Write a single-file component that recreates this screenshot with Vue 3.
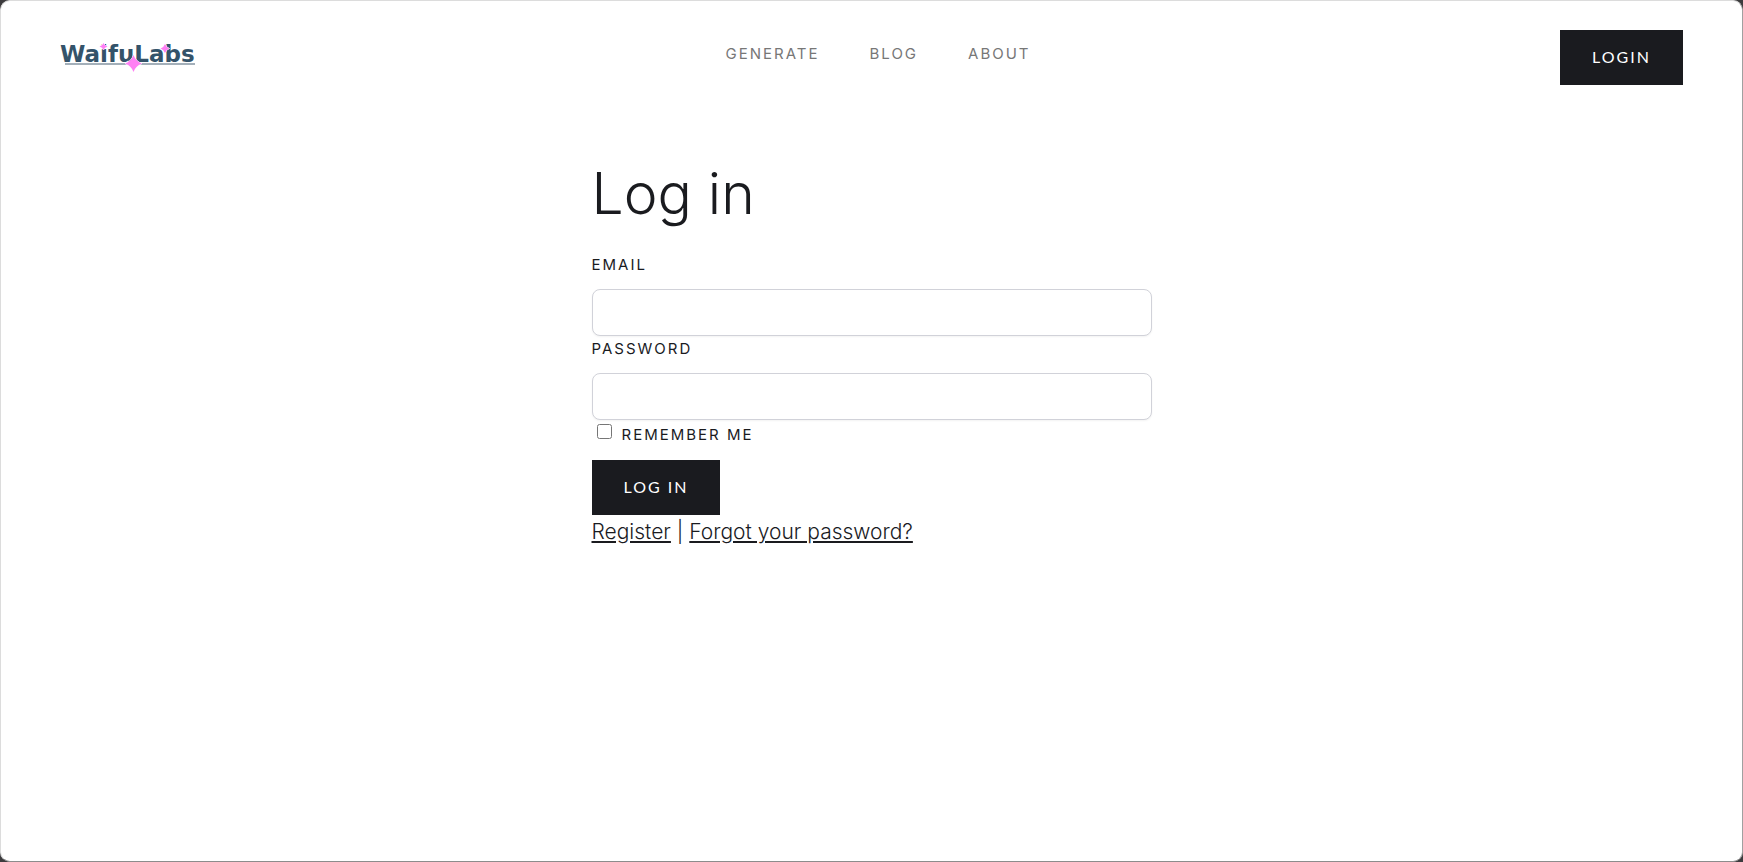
<script setup>
import { ref } from 'vue'

const email = ref('')
const password = ref('')
const remember = ref(false)
const links = ['Generate', 'Blog', 'About']
</script>

<template>
  <div class="page">
    <header class="bar">
      <a class="brand" href="#" aria-label="WaifuLabs">
        <svg width="136" height="32" viewBox="0 0 136 32">
          <path d="M5 22H135" stroke="#a3afb9" stroke-width="2" />
          <text x="0" y="20" class="word">WaifuLabs</text>
          <path class="spark edge" d="M43.500 1Q44.500 4 47.500 4.500Q44.500 5.200 43.500 8Q42.500 5.200 39.500 4.500Q42.500 4 43.500 1Z" />
          <path class="spark edge" d="M105 2Q106.200 5.500 109.500 6.500Q106.200 7.500 105 11Q103.800 7.500 100.500 6.500Q103.800 5.500 105 2Z" />
          <path class="spark edge" d="M73.500 13Q75.800 19.500 82 21.500Q75.800 23.500 73.500 30Q71.200 23.500 65 21.500Q71.200 19.500 73.500 13Z" />
        </svg>
      </a>
      <nav class="nav">
        <a v-for="link in links" :key="link" href="#">{{ link }}</a>
      </nav>
      <button type="button" class="button">Login</button>
    </header>

    <main class="content">
      <h1>Log in</h1>
      <form @submit.prevent>
        <label class="label" for="email">Email</label>
        <input id="email" v-model="email" class="field" type="email" />
        <label class="label" for="password">Password</label>
        <input id="password" v-model="password" class="field" type="password" />
        <div class="remember">
          <input id="remember" v-model="remember" type="checkbox" />
          <label for="remember">Remember me</label>
        </div>
        <button type="submit" class="button">Log in</button>
      </form>
      <p class="more"><a href="#">Register</a> | <a href="#">Forgot your password?</a></p>
    </main>
  </div>
</template>

<style>
body {
  margin: 0;
  background: #3c3b3d;
}
</style>

<style scoped>
.page {
  box-sizing: border-box;
  min-height: 100vh;
  border: 1px solid;
  border-color: #dcdcdc #a0a0a0 #8c8c8c #dcdcdc;
  border-radius: 10px;
  background: #fff;
  color: #1a1b1f;
  font-family: Inter, "Open Sans", sans-serif;
  font-weight: 300;
}

.bar {
  display: flex;
  justify-content: space-between;
  align-items: flex-start;
  padding: 29px 59px 0;
}

.brand {
  margin-top: 12px;
}

.brand svg {
  display: block;
}

.word {
  fill: #34536a;
  font: bold 23px "DejaVu Sans", sans-serif;
}

.spark {
  fill: #ff80f4;
}

.edge {
  stroke: #fff;
  stroke-width: 1px;
  paint-order: stroke;
}

.nav {
  display: flex;
  gap: 50px;
  padding-top: 14px;
}

.nav a {
  color: #777;
  font-size: 15px;
  font-weight: 400;
  line-height: 20px;
  letter-spacing: 2px;
  text-decoration: none;
  text-transform: uppercase;
}

.button {
  height: 55px;
  padding: 0 32px 2px;
  border: 0;
  background: #1a1b1f;
  color: #fff;
  font: 400 16px/24px Lato, sans-serif;
  letter-spacing: 2px;
  text-transform: uppercase;
}

.content {
  box-sizing: border-box;
  width: 100%;
  max-width: 560px;
  margin: 0 auto;
  padding-top: 74px;
}

h1 {
  margin: 0 0 23px;
  font-size: 57px;
  font-weight: 300;
  line-height: 70px;
}

form {
  display: flex;
  flex-direction: column;
  align-items: flex-start;
}

.label,
.remember {
  font-size: 15px;
  font-weight: 400;
  letter-spacing: 2px;
  text-transform: uppercase;
}

.label {
  line-height: 25px;
  margin-bottom: 12px;
}

.field {
  box-sizing: border-box;
  width: 100%;
  height: 47px;
  padding: 8px 12px;
  border: 1px solid #d1d2d9;
  border-radius: 8px;
  background: #fff;
  box-shadow: 0 1px 2px rgba(0, 0, 0, 0.05);
  font: 16px Inter, sans-serif;
}

.remember {
  display: flex;
  align-items: flex-start;
  height: 40px;
}

.remember input {
  width: 15px;
  height: 15px;
  margin: 4px 10px 0 5px;
}

.remember label {
  padding-top: 5px;
  line-height: 20px;
}

.more {
  margin: 3px 0 0;
  font-size: 21px;
  line-height: 28px;
}

.more a {
  color: inherit;
  text-underline-offset: 2px;
}
</style>
